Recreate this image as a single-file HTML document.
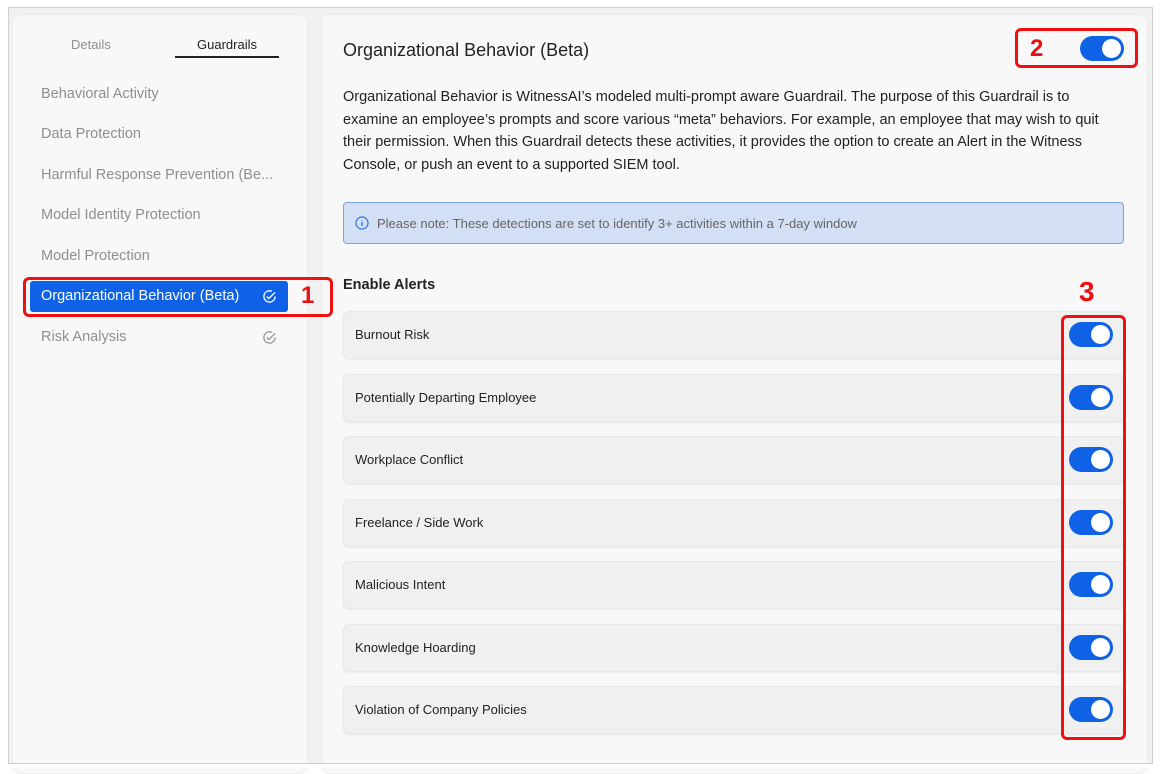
<!DOCTYPE html>
<html><head><style>
*{box-sizing:border-box;margin:0;padding:0}
body{width:1161px;height:768px;background:#fff;font-family:"Liberation Sans",sans-serif;position:relative;overflow:hidden}
.frame{position:absolute;left:8px;top:7px;width:1145px;height:757px;border:1px solid #cfcfcf;background:#f1f1f1;overflow:hidden}
.lp{position:absolute;left:12px;top:14px;width:296px;height:760px;background:#f8f8f8;border-radius:8px;border:1px solid #ececec}
.rp{position:absolute;left:321px;top:14px;width:827px;height:760px;background:#f8f8f8;border-radius:8px;border:1px solid #ececec}
.a{position:absolute;white-space:nowrap}
.nav{position:absolute;left:41px;font-size:14.5px;color:#8d8f93}
.tog{position:absolute;width:44px;height:25px;border-radius:13px;background:#0f62e6}
.tog::after{content:"";position:absolute;right:3px;top:3px;width:19px;height:19px;border-radius:50%;background:#fff}
.row{position:absolute;left:343px;width:781px;height:48px;background:#f0f0f0;border:1px solid #e8e8e8;border-radius:6px;box-shadow:0 1px 2px rgba(0,0,0,.06)}
.row span{position:absolute;left:11px;top:15px;font-size:13px;color:#222}
.red{position:absolute;border:3px solid #f01010;border-radius:6px}
.num{position:absolute;color:#e81010;font-weight:bold;font-size:24px}
.cover{position:absolute;left:0;top:763px;width:1161px;height:5px;background:#fff}
.bl{position:absolute;left:8px;top:763px;width:1145px;height:1px;background:#cfcfcf}
</style></head><body>
<div class="frame"></div>
<div class="lp"></div>
<div class="rp"></div>
<div class="cover"></div>
<div class="bl"></div>
<div class="a" style="left:71px;top:37px;font-size:13px;color:#8d8f93">Details</div>
<div class="a" style="left:197px;top:37px;font-size:13px;color:#222">Guardrails</div>
<div class="a" style="left:175px;top:56px;width:104px;height:2px;background:#222"></div>
<div class="nav" style="top:86px">Behavioral Activity</div>
<div class="nav" style="top:126px">Data Protection</div>
<div class="nav" style="top:167px">Harmful Response Prevention (Be...</div>
<div class="nav" style="top:207px">Model Identity Protection</div>
<div class="nav" style="top:248px">Model Protection</div>
<div class="a" style="left:30px;top:281px;width:258px;height:31px;background:#0f62e6;border-radius:3px"></div>
<div class="nav" style="top:288px;color:#fff">Organizational Behavior (Beta)</div>
<svg class="a" style="left:262px;top:289px" width="15" height="15" viewBox="0 0 16 16"><path d="M14 8A6 6 0 1 1 10.5 2.5" fill="none" stroke="#fff" stroke-width="1.4"/><path d="M5 8l2.2 2.2L14 3.5" fill="none" stroke="#fff" stroke-width="1.4"/></svg>
<div class="nav" style="top:329px">Risk Analysis</div>
<svg class="a" style="left:262px;top:330px" width="15" height="15" viewBox="0 0 16 16"><path d="M14 8A6 6 0 1 1 10.5 2.5" fill="none" stroke="#999" stroke-width="1.4"/><path d="M5 8l2.2 2.2L14 3.5" fill="none" stroke="#999" stroke-width="1.4"/></svg>
<div class="red" style="left:23px;top:277px;width:310px;height:40px"></div>
<div class="num" style="left:301px;top:282px">1</div>

<div class="a" style="left:343px;top:40px;font-size:18px;color:#222">Organizational Behavior (Beta)</div>
<div class="tog" style="left:1080px;top:36px"></div>
<div class="red" style="left:1015px;top:28px;width:123px;height:40px"></div>
<div class="num" style="left:1030px;top:35px">2</div>
<div class="a" style="left:343px;top:86px;width:780px;white-space:normal;font-size:14.5px;line-height:22.5px;color:#222">Organizational Behavior is WitnessAI’s modeled multi-prompt aware Guardrail. The purpose of this Guardrail is to examine an employee’s prompts and score various “meta” behaviors. For example, an employee that may wish to quit their permission. When this Guardrail detects these activities, it provides the option to create an Alert in the Witness Console, or push an event to a supported SIEM tool.</div>
<div class="a" style="left:343px;top:202px;width:781px;height:42px;background:#d3dff5;border:1px solid #7aa4ea;border-radius:4px"></div>
<svg class="a" style="left:355px;top:216px" width="14" height="14" viewBox="0 0 14 14"><circle cx="7" cy="7" r="6" fill="none" stroke="#2f6fe0" stroke-width="1.2"/><path d="M7 6v4M7 4v.8" stroke="#2f6fe0" stroke-width="1.3"/></svg>
<div class="a" style="left:377px;top:216px;font-size:13px;color:#666">Please note: These detections are set to identify 3+ activities within a 7-day window</div>
<div class="a" style="left:343px;top:277px;font-size:14.5px;font-weight:bold;color:#222">Enable Alerts</div>
<div class="row" style="top:311px"><span>Burnout Risk</span></div>
<div class="row" style="top:374px"><span>Potentially Departing Employee</span></div>
<div class="row" style="top:436px"><span>Workplace Conflict</span></div>
<div class="row" style="top:499px"><span>Freelance / Side Work</span></div>
<div class="row" style="top:561px"><span>Malicious Intent</span></div>
<div class="row" style="top:624px"><span>Knowledge Hoarding</span></div>
<div class="row" style="top:686px"><span>Violation of Company Policies</span></div>
<div class="tog" style="left:1069px;top:322px"></div>
<div class="tog" style="left:1069px;top:385px"></div>
<div class="tog" style="left:1069px;top:447px"></div>
<div class="tog" style="left:1069px;top:510px"></div>
<div class="tog" style="left:1069px;top:572px"></div>
<div class="tog" style="left:1069px;top:635px"></div>
<div class="tog" style="left:1069px;top:697px"></div>
<div class="red" style="left:1061px;top:315px;width:65px;height:425px"></div>
<div class="num" style="left:1079px;top:276px;font-size:28px">3</div>
</body></html>
